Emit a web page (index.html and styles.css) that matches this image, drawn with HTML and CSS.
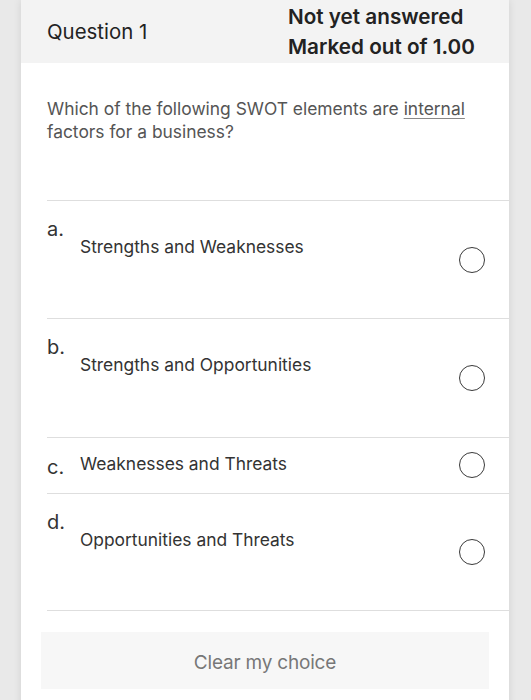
FILE: index.html
```html
<!DOCTYPE html>
<html lang="en">
<head>
<meta charset="utf-8">
<title>Question 1</title>
<link rel="stylesheet" href="styles.css">
</head>
<body>
<div class="card">
  <div class="card-header">
    <div class="q-title">Question 1</div>
    <div class="q-status">
      <div>Not yet answered</div>
      <div>Marked out of 1.00</div>
    </div>
  </div>
  <div class="q-text">Which of the following SWOT elements are <span class="u">internal</span> factors for a business?</div>
  <div class="options">
    <div class="opt opt-tall">
      <div class="opt-label">a.</div>
      <div class="opt-text">Strengths and Weaknesses</div>
      <div class="radio"></div>
    </div>
    <div class="opt opt-tall">
      <div class="opt-label">b.</div>
      <div class="opt-text">Strengths and Opportunities</div>
      <div class="radio"></div>
    </div>
    <div class="opt opt-inline">
      <div class="opt-label">c.</div>
      <div class="opt-text">Weaknesses and Threats</div>
      <div class="radio"></div>
    </div>
    <div class="opt opt-tall">
      <div class="opt-label">d.</div>
      <div class="opt-text">Opportunities and Threats</div>
      <div class="radio"></div>
    </div>
  </div>
  <div class="clear-btn">Clear my choice</div>
</div>
</body>
</html>
```

FILE: styles.css
```css
* { box-sizing: border-box; }
html, body { margin: 0; padding: 0; }
body {
  background: #e9e9e9;
  font-family: Inter, "Noto Sans", "Liberation Sans", sans-serif;
  color: #333;
  height: 700px;
  overflow: hidden;
}
.card {
  margin: 0 22px 0 21px;
  background: #fff;
  box-shadow: 0 0 8px rgba(0,0,0,0.10);
  min-height: 760px;
}
.card-header {
  height: 63px;
  background: #f3f3f3;
  display: flex;
  align-items: center;
  padding-left: 26px;
}
.q-title {
  flex: 0 0 241px;
  font-size: 20.4px;
  color: #222;
}
.q-status {
  font-size: 20.7px;
  font-weight: 600;
  line-height: 30px;
  color: #222;
  margin-top: 1px;
}
.q-text {
  padding: 34px 40px 57px 26px;
  font-size: 17.4px;
  line-height: 23px;
  color: #555;
}
.u { text-decoration: underline; text-underline-offset: 3px; text-decoration-color: #888; }
.options { margin-left: 26px; }
.opt {
  display: flex;
  border-top: 1px solid #dedede;
}
.opt:last-child { border-bottom: 1px solid #dedede; }
.opt-label {
  flex: 0 0 33px;
  font-size: 20px;
  line-height: 24px;
  color: #333;
}
.opt-text {
  flex: 1;
  font-size: 17.4px;
  line-height: 24px;
  color: #333;
}
.opt-tall { height: 118.4px; }
.opt-tall .opt-label { padding-top: 16px; }
.opt-tall .opt-text { padding-top: 34px; }
.opt-inline { height: 56px; }
.opt-inline .opt-label { padding-top: 17px; }
.opt-inline .opt-text { padding-top: 14px; }
.radio {
  align-self: center;
  width: 26px;
  height: 26px;
  border: 1.5px solid #3a3a3a;
  border-radius: 50%;
  margin-right: 24px;
  flex: 0 0 26px;
}
.clear-btn {
  margin: 21px 20px 0 20px;
  height: 57px;
  padding-top: 3px;
  background: #f7f7f7;
  color: #777;
  font-size: 19px;
  display: flex;
  align-items: center;
  justify-content: center;
  letter-spacing: -0.2px;
}
```
